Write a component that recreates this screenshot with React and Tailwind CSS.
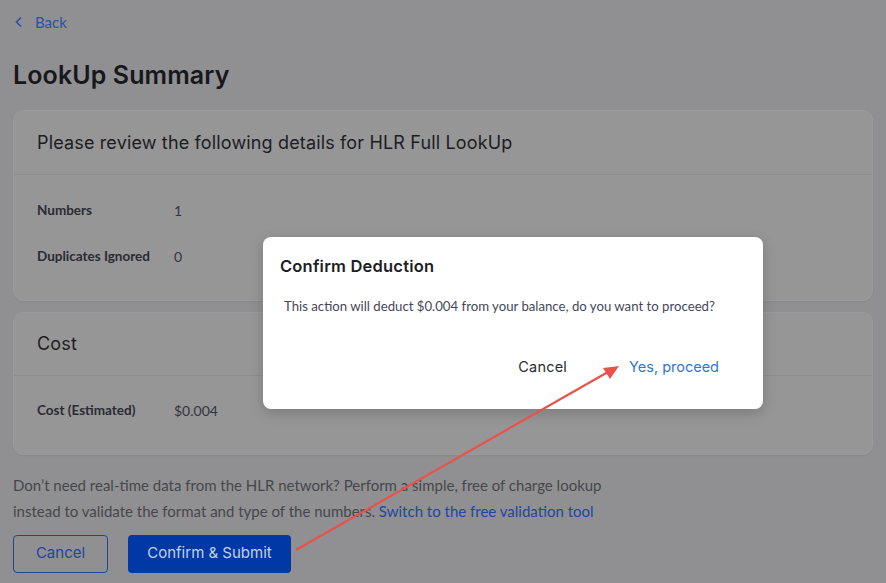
import React from "react";

const heading = { fontFamily: "Inter, 'Noto Sans', sans-serif" };

const Row = ({ label, value }) => (
  <div className="flex items-center h-[46px] text-[13.5px]">
    <span className="w-[137px] font-bold text-[#2a2b33]">{label}</span>
    <span className="text-[14px] text-[#33343b]">{value}</span>
  </div>
);

const App = () => {
  return (
    <div
      className="relative w-[886px] h-[583px] overflow-hidden bg-[#909092] px-[13px]"
      style={{ fontFamily: "Lato, 'Liberation Sans', sans-serif" }}
    >
      <div className="flex items-center gap-[11px] pt-[11px] h-[33px] text-[15px] text-[#2b4fa8]">
        <svg width="10" height="12" viewBox="0 0 10 12" className="ml-[1px]">
          <path d="M7 1.5 L2.5 6 L7 10.5" fill="none" stroke="#2b4fa8" strokeWidth="1.6" />
        </svg>
        <span>Back</span>
      </div>

      <h1 className="mt-[24px] text-[25px] font-semibold text-[#17181c] tracking-[0.1px]" style={heading}>
        LookUp Summary
      </h1>

      <div className="mt-[15px] rounded-[10px] bg-[#969697] border border-[#9b9b9c] shadow-[0_1px_2px_rgba(0,0,0,0.06)]">
        <div className="h-[64px] flex items-center px-[23px] border-b border-[#8c8c8e]">
          <span className="text-[18px] text-[#1c1d22] tracking-[0.15px]" style={heading}>
            Please review the following details for HLR Full LookUp
          </span>
        </div>
        <div className="px-[23px] pt-[13px] pb-[20px]">
          <Row label="Numbers" value="1" />
          <Row label="Duplicates Ignored" value="0" />
        </div>
      </div>

      <div className="mt-[11px] rounded-[10px] bg-[#969697] border border-[#9b9b9c] shadow-[0_1px_2px_rgba(0,0,0,0.06)]">
        <div className="h-[63px] flex items-center px-[23px] border-b border-[#8c8c8e]">
          <span className="text-[18px] text-[#1c1d22] tracking-[0.15px]" style={heading}>
            Cost
          </span>
        </div>
        <div className="px-[23px] pt-[12px] pb-[20px]">
          <Row label="Cost (Estimated)" value="$0.004" />
        </div>
      </div>

      <p className="mt-[17px] text-[15px] leading-[26px] text-[#46474c]">
        Don’t need real-time data from the HLR network? Perform a simple, free of charge lookup
        <br />
        instead to validate the format and type of the numbers.{" "}
        <span className="text-[#1f45a0]">Switch to the free validation tool</span>
      </p>

      <div className="flex gap-[20px] mt-[11px]" style={heading}>
        <button className="w-[95px] h-[38px] rounded-[4px] border border-[#23439a] text-[15px] text-[#2443a0]">
          Cancel
        </button>
        <button className="w-[163px] h-[38px] rounded-[4px] bg-[#0039a6] text-[15px] text-[#c5d0ea]">
          Confirm &amp; Submit
        </button>
      </div>

      <div className="absolute left-[263px] top-[237px] w-[500px] h-[172px] rounded-[8px] bg-white shadow-[0_4px_14px_rgba(0,0,0,0.18)]">
        <div className="pl-[17px] pt-[17px] text-[16.5px] font-semibold text-[#1d1e24] tracking-[0.2px]" style={heading}>
          Confirm Deduction
        </div>
        <div className="pl-[21px] mt-[18px] text-[13.2px] text-[#45475a]">
          This action will deduct $0.004 from your balance, do you want to proceed?
        </div>
        <div className="flex justify-end items-center gap-[62px] pr-[44px] mt-[39px] text-[14.5px] tracking-[0.2px]" style={heading}>
          <span className="text-[#2b2c33]">Cancel</span>
          <span className="text-[#2f74e0] tracking-[0px]">Yes, proceed</span>
        </div>
      </div>

      <svg className="absolute left-0 top-0 pointer-events-none" width="886" height="583">
        <line x1="296" y1="550" x2="608" y2="372" stroke="#e8524a" strokeWidth="2.2" />
        <polygon points="619,366 603,368 610,379" fill="#e8524a" />
      </svg>
    </div>
  );
};

export default App;
